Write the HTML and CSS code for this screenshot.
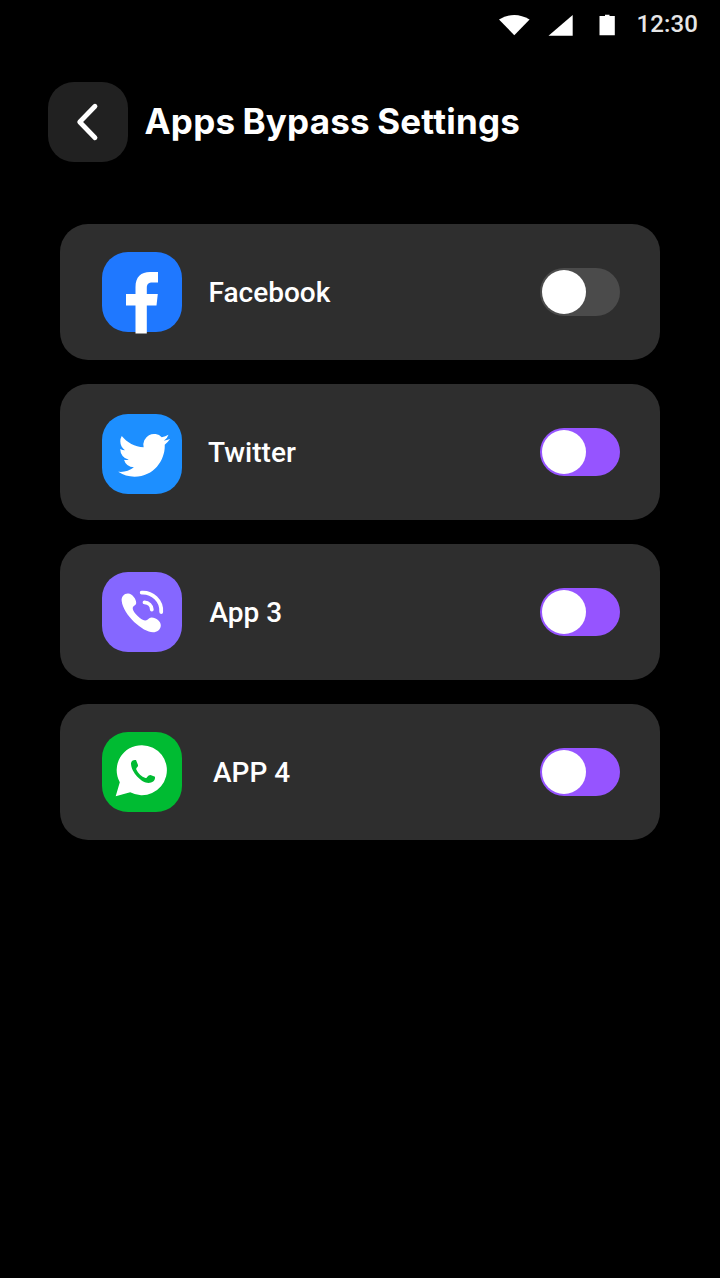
FILE: index.html
```html
<!DOCTYPE html>
<html lang="en">
<head>
<meta charset="utf-8">
<title>Apps Bypass Settings</title>
<link rel="stylesheet" href="styles.css">
</head>
<body>
<div class="screen">
  <div class="status-bar">
    <svg class="status-icons" viewBox="0 0 120 24" aria-hidden="true">
      <path d="M0 5.500Q15.300 -3.500 30.600 5.500L15.300 21.300Z"/>
      <path d="M49.500 21.800L73.700 1V21.800Z"/>
      <path d="M100.500 2H106V.700H110.500V2H115.800V21.200H100.500Z"/>
    </svg>
    <span class="clock">12:30</span>
  </div>
  <header class="header">
    <button class="back" aria-label="Back">
      <svg viewBox="0 0 80 80"><path d="M47 24.300L31.700 40L47 55.700"/></svg>
    </button>
    <h1 class="title">Apps Bypass Settings</h1>
  </header>
  <main class="app-list">
    <section class="app-card">
      <svg class="app-icon facebook" viewBox="0 0 80 80">
        <path d="M33.500 81.600V53.500H24V42H33.500V35C33.500 25 39 20 48 20H56V30.500H50.500C46.500 30.500 44.800 32 44.800 36V42H55.800L54.500 53.500H44.800V81.600Z"/>
      </svg>
      <h2 class="app-name">Facebook</h2>
      <span class="switch" role="switch" aria-checked="false"><span class="knob"></span></span>
    </section>
    <section class="app-card">
      <svg class="app-icon twitter" viewBox="0 0 80 80">
        <path transform="translate(16.200 15) scale(2.160 2.190)" d="M23.953 4.570a10 10 0 01-2.825.775 4.958 4.958 0 002.163-2.723c-.951.555-2.005.959-3.127 1.184a4.920 4.920 0 00-8.384 4.482C7.690 8.095 4.067 6.130 1.640 3.162a4.822 4.822 0 00-.666 2.475c0 1.710.870 3.213 2.188 4.096a4.904 4.904 0 01-2.228-.616v.060a4.923 4.923 0 003.946 4.827 4.996 4.996 0 01-2.212.085 4.936 4.936 0 004.604 3.417 9.867 9.867 0 01-6.102 2.105c-.390 0-.779-.023-1.170-.067a13.995 13.995 0 007.557 2.209c9.053 0 13.998-7.496 13.998-13.985 0-.210 0-.420-.015-.630A9.935 9.935 0 0024 4.590z"/>
      </svg>
      <h2 class="app-name">Twitter</h2>
      <span class="switch on" role="switch" aria-checked="true"><span class="knob"></span></span>
    </section>
    <section class="app-card">
      <svg class="app-icon call" viewBox="0 0 80 80">
        <path d="M19.700 29C19.200 24.500 22.200 21.200 26.200 21.400C30.200 21.600 34.400 27 34.200 31C34 34 30.300 33.500 30.800 37C31.400 40.500 38.500 48 43 48.400C46 48.700 46.500 45.600 49.500 45.500C54 45.400 59 49.500 58.800 53.500C58.700 57.500 55 60.300 51 60.300C41 60.300 21.200 43 19.700 29Z"/>
        <path class="wave" d="M39.700 20.600C50.500 20 60 29 59.200 40M42.500 30.400C46.500 30.600 49.700 33.500 49.800 37.500"/>
      </svg>
      <h2 class="app-name">App 3</h2>
      <span class="switch on" role="switch" aria-checked="true"><span class="knob"></span></span>
    </section>
    <section class="app-card">
      <svg class="app-icon whatsapp" viewBox="0 0 80 80">
        <path d="M40 13.200A25 25 0 1 1 28.200 60.300L13.700 64.300L17.800 50.300A25 25 0 0 1 40 13.200Z"/>
        <path class="receiver" d="M29 31.500C29 28.500 32 27.500 34 28L36 33C36.500 35 33.600 35.700 34.300 37.500C36 41.500 39.500 44.800 43.500 46C45.500 46.500 45.300 43 48.500 43L53 44.800C53.500 48.500 50.500 51 46.500 51C39.500 51 29 40 29 31.500Z"/>
      </svg>
      <h2 class="app-name">APP 4</h2>
      <span class="switch on" role="switch" aria-checked="true"><span class="knob"></span></span>
    </section>
  </main>
</div>
</body>
</html>
```
FILE: styles.css
```css
* { box-sizing: border-box; }
body { margin: 0; background: #000; color: #fff; font-family: Roboto, sans-serif; }
.screen { width: 720px; height: 1278px; background: #000; overflow: hidden; }
.status-bar { display: flex; justify-content: flex-end; height: 48px; padding: 14px 22px 0 0; }
.status-icons { width: 120px; height: 24px; margin-right: 18px; fill: #fff; }
.clock { font-size: 24px; font-weight: 500; line-height: 20px; letter-spacing: .1px; color: #e6e6e6; }
.header { display: flex; align-items: center; gap: 17px; height: 80px; margin: 34px 48px 0; }
.back { width: 80px; height: 80px; padding: 0; border: 0; border-radius: 26px; background: #212121; }
.back svg { display: block; width: 80px; height: 80px; fill: none; stroke: #fff; stroke-width: 4.8; stroke-linecap: round; stroke-linejoin: round; }
.title { margin: 0 0 2px -0.5px; font: 650 35px/48px Inter, sans-serif; letter-spacing: .22px; word-spacing: -1.3px; white-space: nowrap; }
.app-list { display: flex; flex-direction: column; gap: 24px; margin: 62px 60px 0; }
.app-card { display: flex; align-items: center; height: 136px; padding: 0 40px 0 42px; border-radius: 28px; background: #2e2e2e; }
.app-icon { width: 80px; height: 80px; flex: none; margin-right: 26px; border-radius: 26px; fill: #fff; }
.facebook { overflow: visible; margin-right: 26.5px; background: #1f78ff; }
.twitter { margin-top: 4px; background: #1d8fff; }
.call { margin-right: 27.5px; background: #8567ff; }
.call .wave { fill: none; stroke: #fff; stroke-width: 3.8; stroke-linecap: round; }
.whatsapp { margin-right: 31px; background: #00bb32; }
.whatsapp .receiver { fill: #00bb32; }
.app-name { flex: 1; margin: 2px 0 0; font-size: 28px; font-weight: 500; line-height: 36px; }
.switch { display: flex; width: 80px; height: 48px; padding: 2px; border-radius: 24px; background: #4b4b4b; }
.switch.on { background: #9654ff; }
.knob { width: 44px; height: 44px; border-radius: 50%; background: #fff; }
```
